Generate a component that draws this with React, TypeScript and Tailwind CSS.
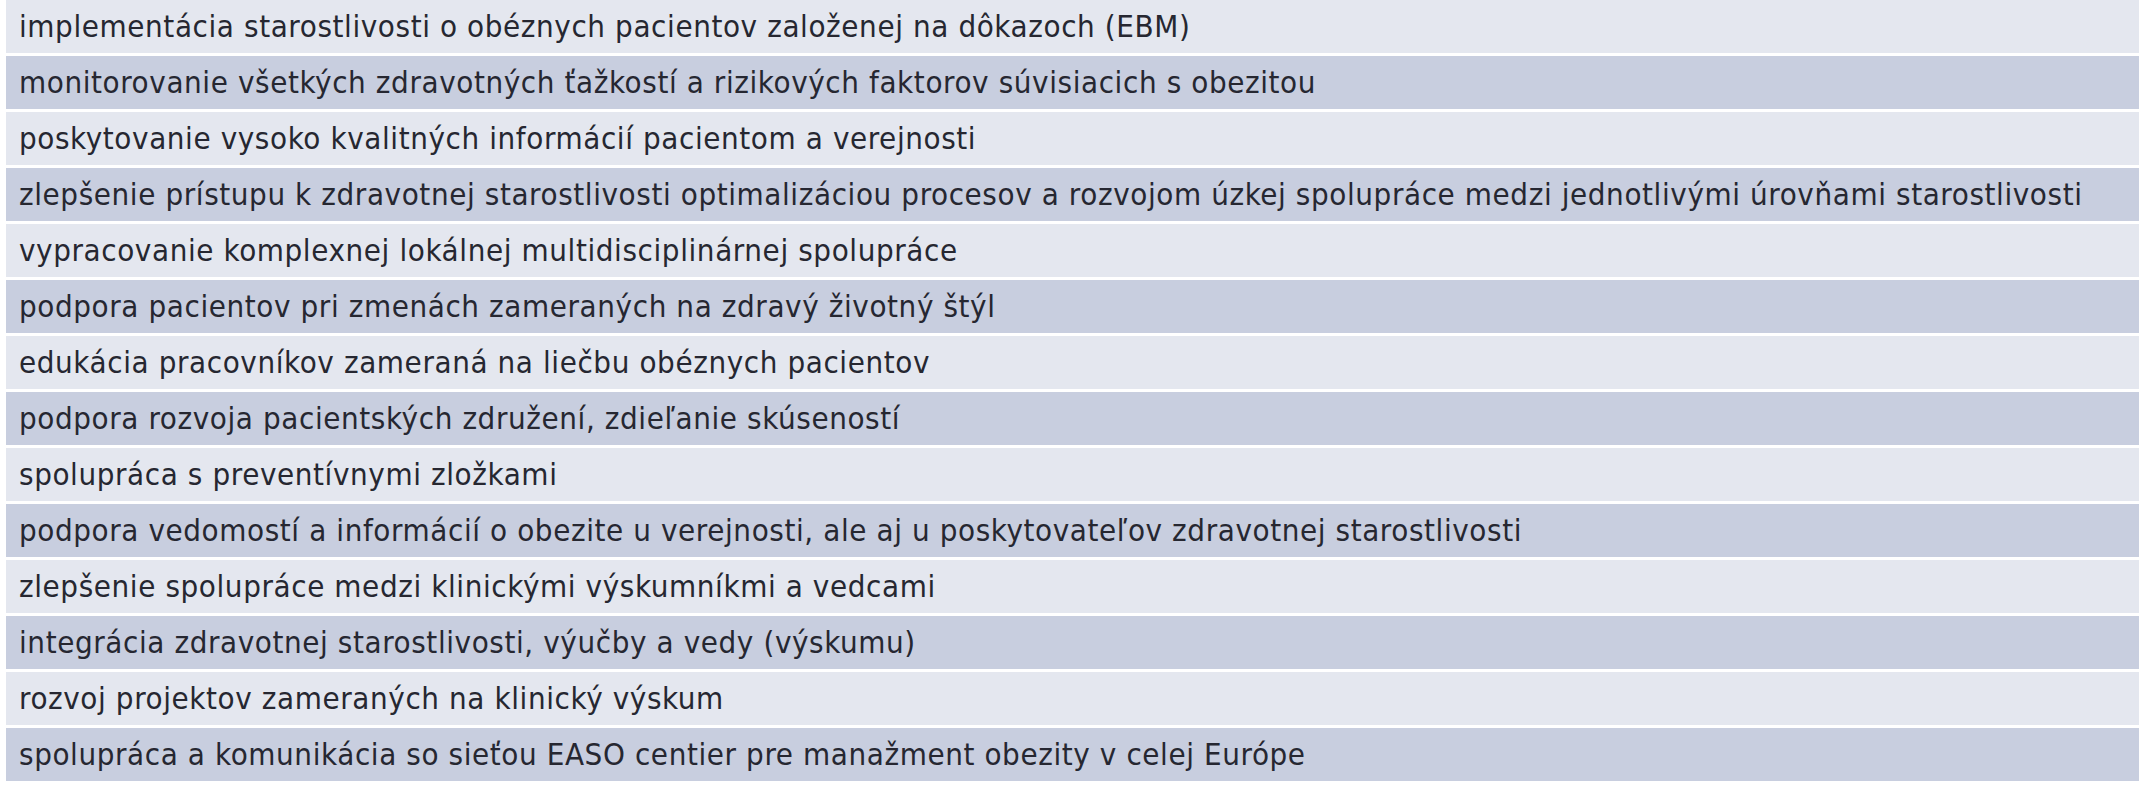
import React from "react";

const rows = [
  "implementácia starostlivosti o obéznych pacientov založenej na dôkazoch (EBM)",
  "monitorovanie všetkých zdravotných ťažkostí a rizikových faktorov súvisiacich s obezitou",
  "poskytovanie vysoko kvalitných informácií pacientom a verejnosti",
  "zlepšenie prístupu k zdravotnej starostlivosti optimalizáciou procesov a rozvojom úzkej spolupráce medzi jednotlivými úrovňami starostlivosti",
  "vypracovanie komplexnej lokálnej multidisciplinárnej spolupráce",
  "podpora pacientov pri zmenách zameraných na zdravý životný štýl",
  "edukácia pracovníkov zameraná na liečbu obéznych pacientov",
  "podpora rozvoja pacientských združení, zdieľanie skúseností",
  "spolupráca s preventívnymi zložkami",
  "podpora vedomostí a informácií o obezite u verejnosti, ale aj u poskytovateľov zdravotnej starostlivosti",
  "zlepšenie spolupráce medzi klinickými výskumníkmi a vedcami",
  "integrácia zdravotnej starostlivosti, výučby a vedy (výskumu)",
  "rozvoj projektov zameraných na klinický výskum",
  "spolupráca a komunikácia so sieťou EASO centier pre manažment obezity v celej Európe",
];

export default function App() {
  return (
    <div className="w-[2139px] h-[800px] bg-white pl-[6px] flex flex-col gap-[3px]">
      {rows.map((t, i) => (
        <div
          key={i}
          className={`h-[53px] flex items-center pl-[13px] whitespace-nowrap text-[#262731] text-[31px] tracking-[0.6px] ${
            i % 2 === 0 ? "bg-[#e4e7ef]" : "bg-[#c8cedf]"
          }`}
          style={{ fontFamily: '"DejaVu Sans Condensed", "DejaVu Sans", sans-serif' }}
        >
          {t}
        </div>
      ))}
    </div>
  );
}
